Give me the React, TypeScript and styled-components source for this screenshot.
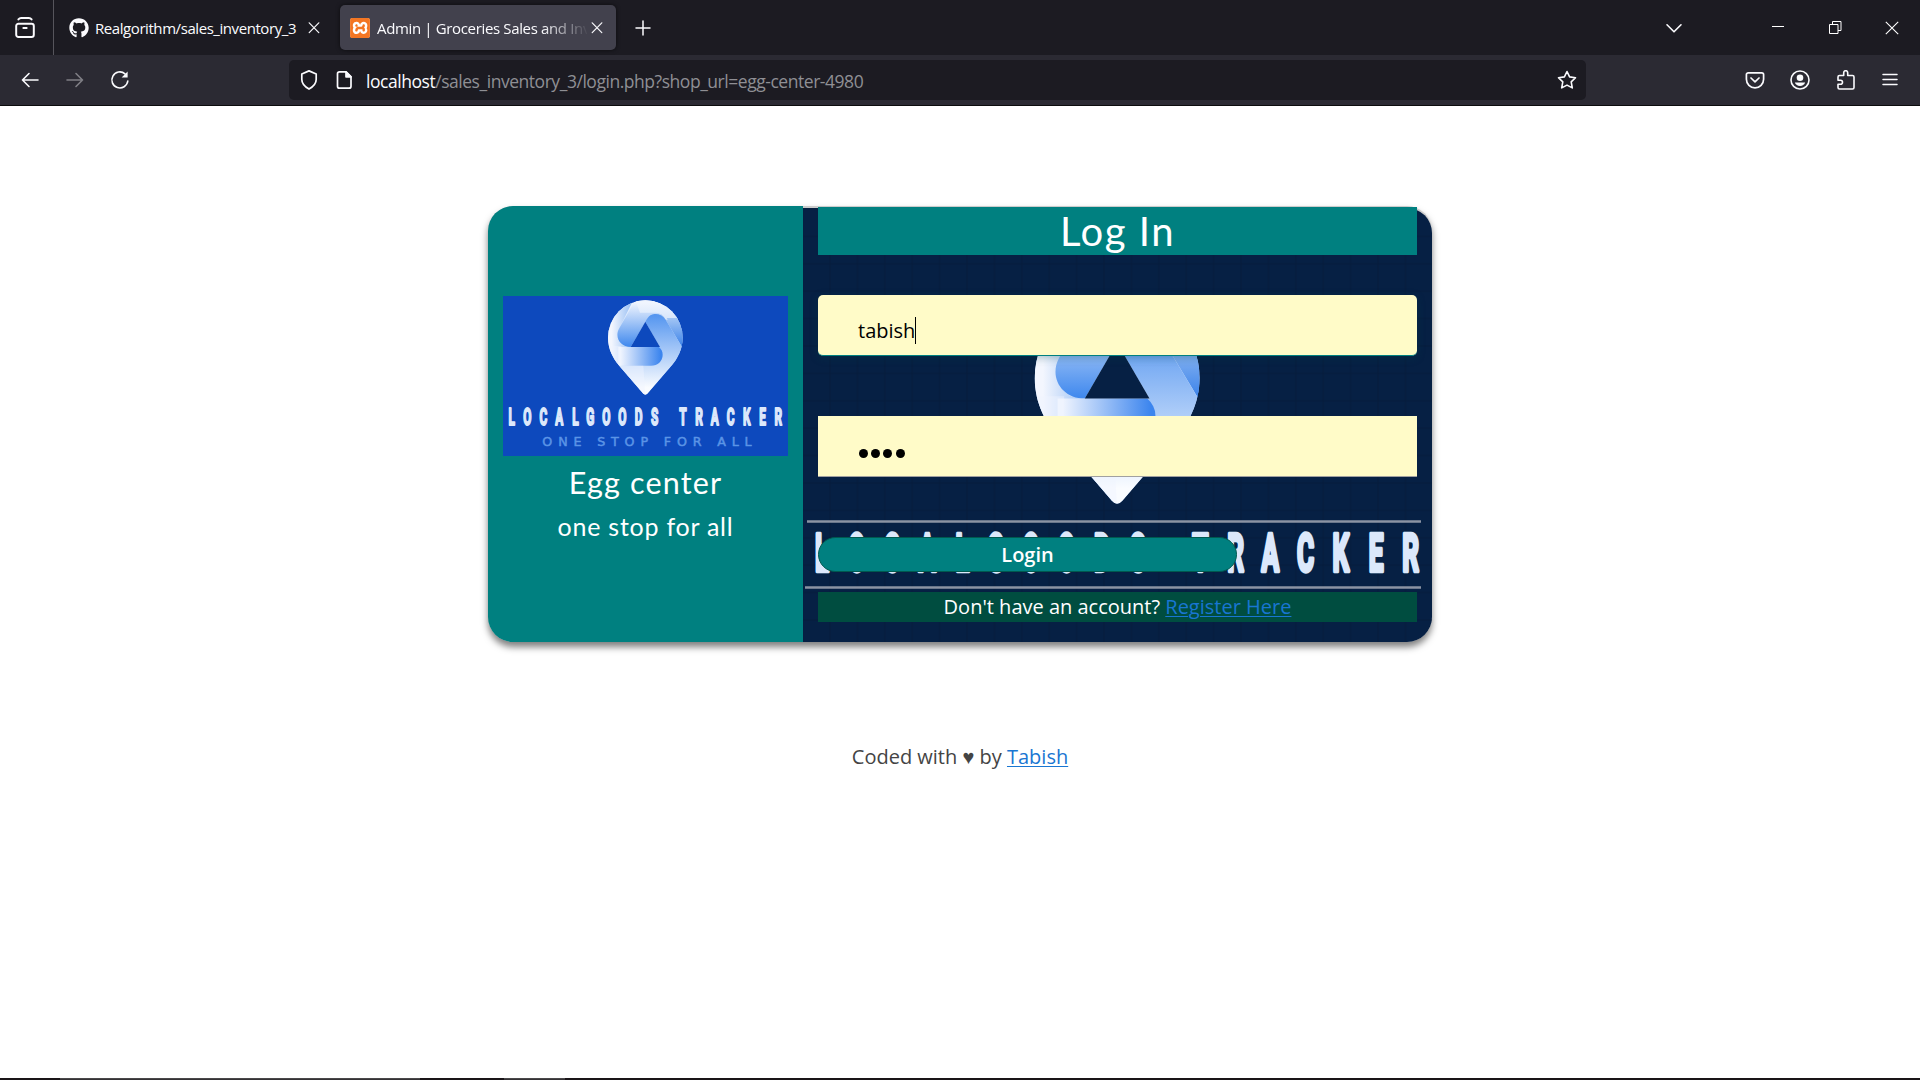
import React from 'react';
import styled, { createGlobalStyle } from 'styled-components';
import { FaGithub } from 'react-icons/fa';
import { SiXampp } from 'react-icons/si';

const ui = '"Open Sans", "Noto Sans", sans-serif';
const heading = 'Lato, "Open Sans", sans-serif';

const GlobalStyle = createGlobalStyle`
  * { box-sizing: border-box; }
  html, body { margin: 0; padding: 0; background: #fff; }
  body { font-family: "Open Sans", sans-serif; font-size: 20px; color: #444; overflow: hidden; }
`;

const Screen = styled.div`
  width: 1920px;
  height: 1080px;
  display: flex;
  flex-direction: column;
  overflow: hidden;
`;

/* Browser chrome */
const TabStrip = styled.div`
  height: 55px;
  flex: none;
  display: flex;
  background: #1c1b22;
  color: #fbfbfe;
  font-family: ${ui};
`;
const SideButton = styled.div`
  width: 54px;
  display: flex;
  align-items: center;
  padding-left: 14px;
  border-right: 1px solid #56555c;
`;
const Tab = styled.div<{ $active?: boolean; $width: number }>`
  width: ${p => p.$width}px;
  height: 45px;
  margin: 5px 5px 0 0;
  padding-left: ${p => (p.$active ? 10 : 15)}px;
  display: flex;
  align-items: center;
  border-radius: 5px;
  background: ${p => (p.$active ? '#42414d' : 'transparent')};
  box-shadow: ${p => (p.$active ? '0 0 4px rgba(0,0,0,.6)' : 'none')};
`;
const TabIcon = styled.span<{ $gap: number }>`
  width: 20px;
  height: 20px;
  margin-right: ${p => p.$gap}px;
  display: flex;
  flex: none;
`;
const XamppIcon = styled(TabIcon)`
  background: #fff;
  border-radius: 3px;
  color: #f37623;
`;
const TabTitle = styled.span<{ $fade?: boolean; $spacing: number; $width: number }>`
  width: ${p => p.$width}px;
  flex: none;
  font-size: 15px;
  line-height: 22px;
  letter-spacing: ${p => p.$spacing}px;
  white-space: nowrap;
  overflow: hidden;
  mask-image: ${p => (p.$fade ? 'linear-gradient(to right, #000 165px, transparent 212px)' : 'none')};
`;
const IconSlot = styled.span<{ $width: number; $dim?: boolean }>`
  width: ${p => p.$width}px;
  opacity: ${p => (p.$dim ? 0.4 : 1)};
  flex: none;
  display: flex;
  align-items: center;
  justify-content: center;
`;
const Spacer = styled.div`
  flex: 1;
`;
const Toolbar = styled.div`
  height: 51px;
  flex: none;
  display: flex;
  align-items: center;
  padding: 0 8px 0 7px;
  background: #2b2a33;
  border-bottom: 1px solid #0c0c0d;
  color: #fbfbfe;
`;
const UrlBar = styled.div`
  width: 1297px;
  height: 40px;
  margin-left: 147px;
  padding-left: 2px;
  display: flex;
  align-items: center;
  border-radius: 5px;
  background: #1c1b22;
`;
const Url = styled.span`
  margin-left: 5px;
  padding-top: 2px;
  font-family: ${ui};
  font-size: 17.5px;
  line-height: 24px;
  letter-spacing: -0.46px;
  color: #8f8f94;
  white-space: nowrap;
`;
const Host = styled.span`
  color: #fbfbfe;
`;

/* Page */
const Page = styled.main`
  flex: 1;
  display: flex;
  flex-direction: column;
  align-items: center;
  padding-top: 100px;
  background: #fff;
`;
const Card = styled.section`
  width: 944px;
  height: 436px;
  display: flex;
  flex: none;
  border-radius: 25px;
  background: #ccc;
  box-shadow: 0 5px 7px rgba(0, 0, 0, 0.5);
`;
const ShopPanel = styled.div`
  width: 315px;
  padding: 90px 15px 0;
  display: flex;
  flex-direction: column;
  align-items: center;
  border-radius: 25px 0 0 25px;
  background: #008080;
  color: #fff;
  font-family: ${heading};
`;
const LogoBox = styled.div`
  width: 285px;
  height: 160px;
  margin-bottom: 8px;
  display: flex;
`;
const ShopName = styled.h2`
  margin: 0 0 9px;
  font-size: 30.5px;
  line-height: 36px;
  font-weight: 400;
  letter-spacing: 1.15px;
`;
const Tagline = styled.h3`
  margin: 0;
  font-size: 25px;
  line-height: 34px;
  font-weight: 400;
  letter-spacing: 0.75px;
`;
const FormPanel = styled.div`
  width: 629px;
  display: grid;
`;
const Backdrop = styled.svg`
  grid-area: 1 / 1;
  width: 629px;
  height: 434px;
  margin-top: 2px;
  border-radius: 0 25px 25px 0;
`;
const Form = styled.form`
  grid-area: 1 / 1;
  z-index: 1;
  margin: 0;
  padding: 1px 15px 0;
  display: flex;
  flex-direction: column;
`;
const Title = styled.h1`
  height: 48px;
  margin: 0 0 40px;
  background: #008080;
  color: #fff;
  font-family: ${heading};
  font-size: 40px;
  line-height: 48px;
  font-weight: 400;
  letter-spacing: 1.5px;
  text-align: center;
`;
const Field = styled.div<{ $focused?: boolean }>`
  height: 61px;
  margin-bottom: 60px;
  padding: 11px 39px 0 40px;
  display: flex;
  align-items: center;
  background: #fffbc8;
  border-bottom: 1px solid ${p => (p.$focused ? '#008080' : '#a0a0a0')};
  border-radius: ${p => (p.$focused ? '5px' : '0')};
  box-shadow: ${p => (p.$focused ? '0 2px 8px rgba(0,70,75,.3)' : 'none')};
  color: #000;
`;
const Caret = styled.i`
  width: 1px;
  height: 27px;
  background: #000;
`;
const Dots = styled.span`
  display: flex;
  gap: 3.2px;
  padding: 3px 0 0 1px;
`;
const Dot = styled.i`
  width: 9px;
  height: 9px;
  border-radius: 50%;
  background: #000;
`;
const LoginButton = styled.button`
  width: 419px;
  height: 35px;
  margin: 0 0 20px;
  padding: 0;
  border: 1px solid #00594f;
  border-radius: 18px;
  background: #008080;
  color: #fff;
  font: 600 20px/31px "Open Sans", sans-serif;
`;
const Register = styled.div`
  height: 30px;
  background: #004d40;
  color: #fff;
  line-height: 30px;
  text-align: center;
`;
const Link = styled.a`
  color: #1976d2;
  text-decoration: underline;
  text-decoration-thickness: 1px;
  text-underline-offset: 2px;
`;
const Credit = styled.p`
  margin: 100px 0 0;
  line-height: 30px;
`;
const TaskbarEdge = styled.div`
  height: 2px;
  flex: none;
  display: flex;
  background: #1a1518;
`;
const TaskSegment = styled.span<{ $gap: number; $width: number }>`
  width: ${p => p.$width}px;
  margin-left: ${p => p.$gap}px;
  background: #4a484a;
  border-bottom: 1px solid #353335;
`;

const Icon = ({ children, size = 20, w = 1.6 }: { children: React.ReactNode; size?: number; w?: number }) => (
  <svg width={size} height={size} viewBox="0 0 20 20" fill="none" stroke="currentColor" strokeWidth={w} strokeLinecap="round" strokeLinejoin="round">
    {children}
  </svg>
);
const Cross = () => (
  <Icon w={1.2}><path d="M5.2 4.8l9.6 9.8M14.8 4.8l-9.6 9.8" /></Icon>
);

/* Map pin with three interlocking arms, drawn in 855x480 logo units */
const Pin = ({ id, hole }: { id: string; hole: string }) => {
  const outline = 'M24 125A112 112 0 0 1 248 125C248 160 232 187 216 207L143 292Q136 300 129 292L56 207C40 187 24 160 24 125Z';
  const g = (n: string) => `url(#${id}${n})`;
  const grad = (n: string, vertical: boolean, a: number, b: number, from: string, to: string) => (
    <linearGradient id={id + n} gradientUnits="userSpaceOnUse" x1={vertical ? 0 : a} x2={vertical ? 0 : b} y1={vertical ? a : 0} y2={vertical ? b : 0}>
      <stop stopColor={from} />
      <stop offset="1" stopColor={to} />
    </linearGradient>
  );
  return (
    <g transform="translate(291 0)">
      <defs>
        {grad('edge', false, 35, 112, '#f3f6fe', '#7fb0f1')}
        {grad('left', true, 20, 150, '#f0f5fe', '#428aee')}
        {grad('top', true, 20, 110, '#f0f5fe', '#c2d9f9')}
        {grad('cres', true, 65, 150, '#a4c6f4', '#3d84ea')}
        {grad('right', true, 60, 275, '#5797f0', '#fafcff')}
        {grad('low', false, 62, 182, '#eff4fe', '#3c85ee')}
        <clipPath id={id + 'clip'}><path d={outline} /></clipPath>
      </defs>
      <path d={outline} fill={g('top')} />
      <g clipPath={g('clip')}>
        <path d="M106 0L57 98Q45 153 92 153L62 209L136 300H0V0Z" fill={g('edge')} />
        <path d="M106 12L57 98C43 124 61 153 92 153L136 77L168 54H200V8Z" fill={g('left')} />
        <path d="M180 54L200 8L256 62V156L246 152L197 71Z" fill={g('cres')} />
        <path d="M106 12H215L236 72L197 71Q186 50 168 50H120Z" fill={g('top')} />
        <path d="M200 66L256 66V156L246 152Z" fill={g('cres')} />
        <path d="M136 77C147 57 155 54 168 54Q186 54 197 71L248 156V300H60V209H100L180 153Z" fill={g('right')} />
        <path d="M55 153H177Q188 163 188 176C188 195 173 209 153 209H55Z" fill={g('low')} />
        <path d="M20 150H64V209H130L136 300H20Z" fill="#f0f4fe" opacity=".45" />
      </g>
      <path d="M136 77L180 153H92Z" fill={hole} />
    </g>
  );
};

const wordX = [26, 73, 121, 169, 217, 262, 310, 358, 407, 455, 540, 588, 635, 683, 731, 779, 826];
const Wordmark = () => (
  <g fill="#dce8fb" stroke="#dce8fb" strokeWidth="6" strokeLinejoin="round" fontFamily="Roboto, sans-serif" fontWeight="700" fontSize="71" textAnchor="middle">
    <text transform="translate(0 387) scale(.5 1)" x={wordX.map(x => x / 0.5).join(' ')} y="0">LOCALGOODSTRACKER</text>
  </g>
);

const BrandLogo = () => (
  <svg width="285" height="160" viewBox="0 0 855 480">
    <rect width="855" height="480" fill="#0d49bd" />
    <Pin id="brand" hole="#0d49bd" />
    <Wordmark />
    <text x="118" y="449" fill="#5b94e6" stroke="#5b94e6" strokeWidth="1.5" fontFamily="'DejaVu Sans', sans-serif" fontSize="38" textLength="628">ONE STOP FOR ALL</text>
  </svg>
);

const FormBackdrop = () => (
  <Backdrop viewBox="0 0 629 434">
    <defs>
      <pattern id="grid" width="27.4" height="27.4" patternUnits="userSpaceOnUse" x="26" y="0">
        <path d="M1 0V27.4M0 1H27.4" stroke="#061c3c" strokeWidth="1" />
      </pattern>
    </defs>
    <rect width="629" height="434" fill="#062044" />
    <rect width="629" height="434" fill="url(#grid)" />
    <g transform="translate(0 78) scale(.7357)">
      <Pin id="back" hole="#062044" />
      <Wordmark />
    </g>
    <path d="M4 313.500H618M2 379.500H618" stroke="#8b93a3" strokeWidth="2.4" />
  </Backdrop>
);

export default function App() {
  return (
    <Screen>
      <GlobalStyle />
      <TabStrip>
        <SideButton>
          <Icon size={22} w={1.8}><rect x="2" y="6.2" width="16" height="12" rx="2" /><path d="M4 2.2Q5 1 6.5 1h7Q15 1 16 2.2M8.5 10h3" /></Icon>
        </SideButton>
        <Tab $width={281}>
          <TabIcon $gap={6}><FaGithub size={20} /></TabIcon>
          <TabTitle $width={209} $spacing={-0.43}>Realgorithm/sales_inventory_3</TabTitle>
          <IconSlot $width={20}><Cross /></IconSlot>
        </Tab>
        <Tab $active $width={276}>
          <XamppIcon $gap={7}><SiXampp size={20} /></XamppIcon>
          <TabTitle $fade $width={210} $spacing={-0.35}>Admin | Groceries Sales and Inventory</TabTitle>
          <IconSlot $width={20}><Cross /></IconSlot>
        </Tab>
        <IconSlot $width={44}><Icon w={1.5}><path d="M10 3v14M3 10h14" /></Icon></IconSlot>
        <Spacer />
        <IconSlot $width={36}><Icon><path d="M3 6.800l7 7 7-7" /></Icon></IconSlot>
        <IconSlot $width={171}>
          <svg width="171" height="55" fill="none" stroke="#fff" strokeWidth="1">
            <path d="M80 26.500h12M137.500 24.500h8.500v9h-8.500zM140.500 24v-2.500h8.500v9h-3" />
          </svg>
        </IconSlot>
        <IconSlot $width={57}>
          <svg width="14" height="14" fill="none" stroke="#fff" strokeWidth="1.1"><path d="M.8.8l12.400 12.400M13.200.8L.8 13.200" /></svg>
        </IconSlot>
      </TabStrip>
      <Toolbar>
        <IconSlot $width={45}><Icon><path d="M18 10H2.500M9 3.500L2.500 10 9 16.500" /></Icon></IconSlot>
        <IconSlot $width={45} $dim><Icon><path d="M2 10h15.500M11 3.500l6.500 6.500-6.500 6.500" /></Icon></IconSlot>
        <IconSlot $width={46}><Icon><path d="M17.800 11A8 8 0 1 1 15 3.800" /><path d="M17.600 1.500v6h-6z" fill="currentColor" stroke="none" /></Icon></IconSlot>
        <UrlBar style={{ marginLeft: 146 }}>
          <IconSlot $width={35}><Icon w={1.7}><path d="M10 .9L17.200 4v5.500c0 4-3.200 7.300-7.200 9.600-4-2.300-7.200-5.600-7.200-9.600V4z" /></Icon></IconSlot>
          <IconSlot $width={35}><Icon w={1.7}><path d="M5.500 1.800H12l5 5v9.400a2 2 0 0 1-2 2H5.500a2 2 0 0 1-2-2V3.800a2 2 0 0 1 2-2z" /><path d="M12 1.800v5h5z" fill="currentColor" /></Icon></IconSlot>
          <Url><Host>localhost</Host>/sales_inventory_3/login.php?shop_url=egg-center-4980</Url>
          <Spacer />
          <IconSlot $width={38}><Icon w={1.6}><path d="M10 1.500l2.600 5.400 5.900.8-4.300 4.200 1.100 6L10 15.100l-5.300 2.800 1.100-6L1.500 7.700l5.900-.8z" /></Icon></IconSlot>
        </UrlBar>
        <Spacer />
        <IconSlot $width={45}><Icon w={1.7}><path d="M3.200 2.800h13.600a1.800 1.800 0 0 1 1.800 1.800v4.600a8.600 8.600 0 0 1-17.200 0V4.600a1.800 1.800 0 0 1 1.800-1.800zM6 8l4 3.800L14 8" /></Icon></IconSlot>
        <IconSlot $width={46}><Icon w={1.6}><circle cx="10" cy="10" r="9" /><circle cx="10" cy="7.800" r="3.300" fill="currentColor" stroke="none" /><path d="M4.800 12.500h10.400q-1.400 3.400-5.200 3.400t-5.200-3.400z" fill="currentColor" stroke="none" /></Icon></IconSlot>
        <IconSlot $width={45}><Icon w={1.600}><path d="M3.500 5.500h4.200V2.700a2 2 0 0 1 4 0v2.800h4.800a1.500 1.500 0 0 1 1.500 1.500v10.500a1.500 1.500 0 0 1-1.500 1.500H3.500A1.500 1.500 0 0 1 2 17.500v-3.300h2.500a2 2 0 0 0 0-4H2V7a1.500 1.500 0 0 1 1.500-1.500z" /></Icon></IconSlot>
        <IconSlot $width={44}><Icon w={1.500}><path d="M3 4.500h14M3 9.500h14M3 14.500h14" /></Icon></IconSlot>
      </Toolbar>
      <Page>
        <Card>
          <ShopPanel>
            <LogoBox><BrandLogo /></LogoBox>
            <ShopName>Egg center</ShopName>
            <Tagline>one stop for all</Tagline>
          </ShopPanel>
          <FormPanel>
            <FormBackdrop />
            <Form>
              <Title>Log In</Title>
              <Field $focused>tabish<Caret /></Field>
              <Field><Dots><Dot /><Dot /><Dot /><Dot /></Dots></Field>
              <LoginButton type="button">Login</LoginButton>
              <Register>Don't have an account? <Link>Register Here</Link></Register>
            </Form>
          </FormPanel>
        </Card>
        <Credit>Coded with ♥ by <Link>Tabish</Link></Credit>
      </Page>
      <TaskbarEdge>
        <TaskSegment $gap={60} $width={360} />
        <TaskSegment $gap={84} $width={61} />
      </TaskbarEdge>
    </Screen>
  );
}
